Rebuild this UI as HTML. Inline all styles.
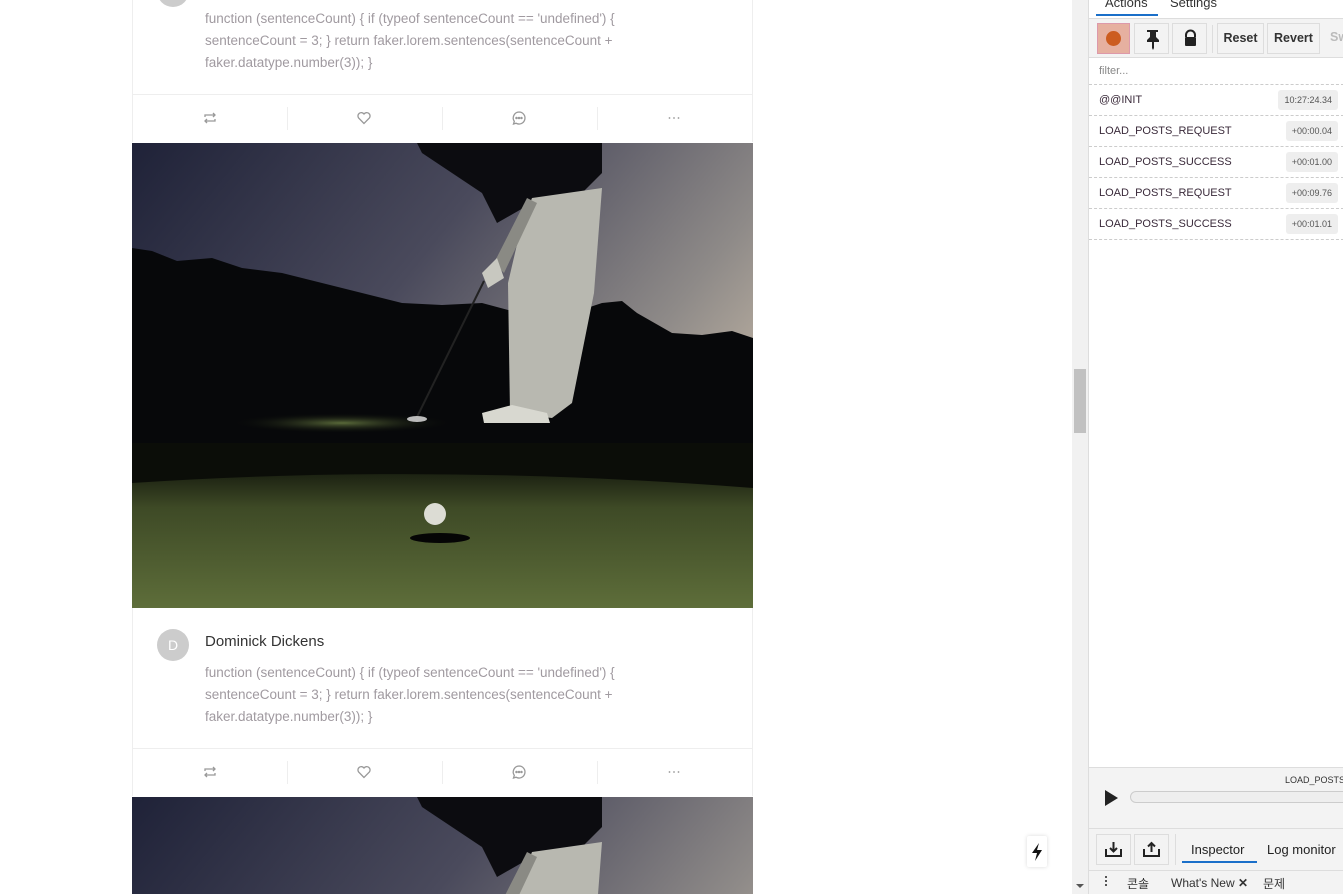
<!DOCTYPE html>
<html><head><meta charset="utf-8"><style>
*{margin:0;padding:0;box-sizing:border-box}
body{width:1343px;height:894px;overflow:hidden;background:#fff;font-family:"Liberation Sans","Noto Sans CJK KR",sans-serif;position:relative}
.card{position:absolute;left:132px;width:621px;border-left:1px solid #eee;border-right:1px solid #eee;background:#fff}
.txt{position:absolute;left:205px;font-size:13.5px;line-height:22px;color:#a09aa0;width:500px}
.bar{position:absolute;left:132px;width:621px;height:48px;border-top:1px solid #eee;border-left:1px solid #eee;border-right:1px solid #eee}
.bar .div{position:absolute;top:12px;height:23px;width:1px;background:#eee}
.bar svg{position:absolute;top:15px}
.avatar{position:absolute;left:157px;width:32px;height:32px;border-radius:50%;background:#ccc;color:#fff;font-size:14px;text-align:center;line-height:32px}
.dev{position:absolute;left:1088px;top:0;width:255px;height:894px;background:#fff;border-left:1px solid #ddd;font-size:11px;color:#333}
.row{position:absolute;left:0;width:255px;height:31px;border-bottom:1px dashed #ccc}
.row span{position:absolute;left:10px;top:9px;font-size:11px;color:#3a2a3a}
.row b{position:absolute;right:6px;top:5px;height:20px;background:#eee;border-radius:3px;font-weight:normal;font-size:9px;color:#555;padding:0 6px;line-height:20px}
.btn{position:absolute;top:23px;height:31px;border:1px solid #ddd;background:#f3f3f3;font-size:12.5px;font-weight:bold;color:#333;line-height:29px;text-align:center}
</style></head><body>

<div class="card" style="top:0;height:95px"></div>
<div class="avatar" style="top:-25px"></div>
<div class="txt" style="top:8px">function (sentenceCount) { if (typeof sentenceCount == 'undefined') { sentenceCount = 3; } return faker.lorem.sentences(sentenceCount + faker.datatype.number(3)); }</div>

<div class="bar" style="top:94px">
 <svg style="left:69px" width="16" height="16" viewBox="0 0 16 16" fill="none" stroke="#999" stroke-width="1.3"><path d="M3 7V5h10M11 3l2 2-2 2M13 9v2H3M5 13l-2-2 2-2"/></svg>
 <div class="div" style="left:154px"></div>
 <svg style="left:223px" width="16" height="16" viewBox="0 0 16 16" fill="none" stroke="#999" stroke-width="1.3"><path d="M8 13.5L2.6 8A3.2 3.2 0 0 1 8 4a3.2 3.2 0 0 1 5.4 4z"/></svg>
 <div class="div" style="left:309px"></div>
 <svg style="left:378px" width="16" height="16" viewBox="0 0 16 16" fill="none" stroke="#999" stroke-width="1.3"><path d="M8 2a6 6 0 1 1-3 11.2L2.5 14l.8-2.6A6 6 0 0 1 8 2z"/><circle cx="5.5" cy="8" r=".6" fill="#999"/><circle cx="8" cy="8" r=".6" fill="#999"/><circle cx="10.5" cy="8" r=".6" fill="#999"/></svg>
 <div class="div" style="left:464px"></div>
 <svg style="left:533px" width="16" height="16" viewBox="0 0 16 16" fill="#999"><circle cx="3.5" cy="8" r="0.9"/><circle cx="8" cy="8" r="0.9"/><circle cx="12.5" cy="8" r="0.9"/></svg>
</div>

<svg id="golf" style="position:absolute;left:132px;top:143px" width="621" height="466" viewBox="0 0 621 466">
<defs>
<linearGradient id="sky" x1="0" y1="0" x2="1" y2="0.6"><stop offset="0" stop-color="#1f2238"/><stop offset=".45" stop-color="#4a4a5c"/><stop offset=".8" stop-color="#8e8a88"/><stop offset="1" stop-color="#c0b4a4"/></linearGradient>
<linearGradient id="grass" x1="0" y1="0" x2="0" y2="1"><stop offset="0" stop-color="#1c2212"/><stop offset=".25" stop-color="#3e4a26"/><stop offset="1" stop-color="#5e6e3a"/></linearGradient>
<radialGradient id="glow" cx=".5" cy=".5" r=".5"><stop offset="0" stop-color="#5a6a3a"/><stop offset="1" stop-color="#0a0c08" stop-opacity="0"/></radialGradient>
</defs>
<rect width="621" height="466" fill="url(#sky)"/>
<path d="M0 105L20 108 45 118 80 115 110 125 150 130 190 140 230 150 270 160 310 162 350 160 380 168 440 170 470 160 490 158 505 170 540 190 570 192 600 188 621 195V340H0z" fill="#07080a"/>
<rect y="300" width="621" height="60" fill="#0b0d08"/>
<path d="M0 340Q300 320 621 345V466H0z" fill="url(#grass)"/>
<ellipse cx="210" cy="280" rx="110" ry="10" fill="url(#glow)"/>
<path d="M285 0H470V30L440 60 400 60 365 80 350 50 290 10z" fill="#0c0c10"/>
<path d="M400 55L470 45 462 150 440 260 420 275 378 270 376 140 390 80z" fill="#b8b8b0"/>
<path d="M362 120L395 55 405 60 372 130z" fill="#8a8a84"/>
<path d="M350 130L365 115 372 135 356 145z" fill="#c8c8c0"/>
<path d="M352 138L284 276" stroke="#222" stroke-width="2"/>
<ellipse cx="285" cy="276" rx="10" ry="3" fill="#bbb"/>
<path d="M350 270L380 262 415 270 418 280 352 280z" fill="#d8d8d0"/>
<ellipse cx="308" cy="395" rx="30" ry="5" fill="#050505"/>
<circle cx="303" cy="371" r="11" fill="#dcdcd4"/>
</svg>

<div class="card" style="top:608px;height:141px"></div>
<div class="avatar" style="top:629px">D</div>
<div style="position:absolute;left:205px;top:633px;font-size:15px;color:#333;font-weight:500">Dominick Dickens</div>
<div class="txt" style="top:662px">function (sentenceCount) { if (typeof sentenceCount == 'undefined') { sentenceCount = 3; } return faker.lorem.sentences(sentenceCount + faker.datatype.number(3)); }</div>

<div class="bar" style="top:748px">
 <svg style="left:69px" width="16" height="16" viewBox="0 0 16 16" fill="none" stroke="#999" stroke-width="1.3"><path d="M3 7V5h10M11 3l2 2-2 2M13 9v2H3M5 13l-2-2 2-2"/></svg>
 <div class="div" style="left:154px"></div>
 <svg style="left:223px" width="16" height="16" viewBox="0 0 16 16" fill="none" stroke="#999" stroke-width="1.3"><path d="M8 13.5L2.6 8A3.2 3.2 0 0 1 8 4a3.2 3.2 0 0 1 5.4 4z"/></svg>
 <div class="div" style="left:309px"></div>
 <svg style="left:378px" width="16" height="16" viewBox="0 0 16 16" fill="none" stroke="#999" stroke-width="1.3"><path d="M8 2a6 6 0 1 1-3 11.2L2.5 14l.8-2.6A6 6 0 0 1 8 2z"/><circle cx="5.5" cy="8" r=".6" fill="#999"/><circle cx="8" cy="8" r=".6" fill="#999"/><circle cx="10.5" cy="8" r=".6" fill="#999"/></svg>
 <div class="div" style="left:464px"></div>
 <svg style="left:533px" width="16" height="16" viewBox="0 0 16 16" fill="#999"><circle cx="3.5" cy="8" r="0.9"/><circle cx="8" cy="8" r="0.9"/><circle cx="12.5" cy="8" r="0.9"/></svg>
</div>

<div style="position:absolute;left:132px;top:797px;width:621px;height:97px;overflow:hidden">
<svg width="621" height="466" viewBox="0 0 621 466">
<use href="#golf"/>
<rect width="621" height="466" fill="url(#sky)"/>
<path d="M0 105L20 108 45 118 80 115 110 125 150 130 190 140 230 150 270 160 310 162 350 160 380 168 440 170 470 160 490 158 505 170 540 190 570 192 600 188 621 195V340H0z" fill="#07080a"/>
<path d="M285 0H470V30L440 60 400 60 365 80 350 50 290 10z" fill="#0c0c10"/>
<path d="M400 55L470 45 462 150 440 260 420 275 378 270 376 140 390 80z" fill="#b8b8b0"/>
<path d="M362 120L395 55 405 60 372 130z" fill="#8a8a84"/>
</svg></div>

<!-- scrollbar -->
<div style="position:absolute;left:1072px;top:0;width:16px;height:894px;background:#f1f1f1"></div>
<div style="position:absolute;left:1074px;top:369px;width:12px;height:64px;background:#c1c1c1"></div>
<div style="position:absolute;left:1076px;top:884px;width:0;height:0;border-left:4px solid transparent;border-right:4px solid transparent;border-top:4px solid #555"></div>

<!-- lightning -->
<div style="position:absolute;left:1027px;top:836px;width:20px;height:31px;background:#fff;box-shadow:0 0 4px rgba(0,0,0,.15);border-radius:2px">
<svg width="20" height="31" viewBox="0 0 20 31"><path d="M12 7L5 17h5l-2 8 7-11h-5z" fill="#111"/></svg></div>

<div class="dev">
 <div style="position:absolute;left:0;top:0;width:255px;height:19px;border-bottom:1px solid #ddd;background:#fff"></div>
 <div style="position:absolute;left:16px;top:-5px;font-size:13px;color:#333">Actions</div>
 <div style="position:absolute;left:81px;top:-5px;font-size:13px;color:#333">Settings</div>
 <div style="position:absolute;left:7px;top:14px;width:62px;height:2px;background:#1a6fc9"></div>
 <div style="position:absolute;left:0;top:19px;width:255px;height:39px;background:#f3f3f3;border-bottom:1px solid #ddd"></div>
 <div class="btn" style="left:8px;width:33px;background:#e6b0a0;border-color:#d9a"><div style="position:absolute;left:8px;top:7px;width:15px;height:15px;border-radius:50%;background:#cc5c20"></div></div>
 <div class="btn" style="left:45px;width:35px"><svg width="35" height="29" viewBox="0 0 35 29"><path d="M12 6h11v2h-2v5l3 3v2h-5v6l-1 2-1-2v-6h-5v-2l3-3V8h-3z" fill="#222"/></svg></div>
 <div class="btn" style="left:83px;width:35px"><svg width="35" height="29" viewBox="0 0 35 29"><path d="M13 13v-2a4.5 4.5 0 0 1 9 0v2" fill="none" stroke="#222" stroke-width="2"/><rect x="12" y="13" width="11" height="9" rx="1" fill="#222"/></svg></div>
 <div style="position:absolute;left:123px;top:25px;width:1px;height:28px;background:#ddd"></div>
 <div class="btn" style="left:128px;width:47px">Reset</div>
 <div class="btn" style="left:178px;width:53px">Revert</div>
 <div style="position:absolute;left:241px;top:30px;font-size:12.5px;color:#bbb;font-weight:bold">Sw</div>
 <div style="position:absolute;left:0;top:58px;width:255px;height:27px;border-bottom:1px dashed #ccc"><span style="position:absolute;left:10px;top:7px;color:#888;font-size:11px">filter...</span></div>
 <div class="row" style="top:85px"><span>@@INIT</span><b>10:27:24.34</b></div>
 <div class="row" style="top:116px"><span>LOAD_POSTS_REQUEST</span><b>+00:00.04</b></div>
 <div class="row" style="top:147px"><span>LOAD_POSTS_SUCCESS</span><b>+00:01.00</b></div>
 <div class="row" style="top:178px"><span>LOAD_POSTS_REQUEST</span><b>+00:09.76</b></div>
 <div class="row" style="top:209px"><span>LOAD_POSTS_SUCCESS</span><b>+00:01.01</b></div>

 <div style="position:absolute;left:0;top:767px;width:255px;height:61px;background:#f3f3f3;border-top:1px solid #ddd"></div>
 <div style="position:absolute;left:196px;top:775px;font-size:9px;color:#333">LOAD_POSTS</div>
 <svg style="position:absolute;left:14px;top:789px" width="16" height="18"><path d="M2 1l13 8-13 8z" fill="#222"/></svg>
 <div style="position:absolute;left:41px;top:791px;width:230px;height:12px;border:1px solid #ccc;border-radius:6px;background:#eee"></div>

 <div style="position:absolute;left:0;top:828px;width:255px;height:42px;background:#f3f3f3;border-top:1px solid #ddd"></div>
 <div class="btn" style="left:7px;top:834px;width:35px"><svg width="33" height="29" viewBox="0 0 33 29"><path d="M9 14v7h15v-7M16.5 7v9M13 13l3.5 3.5L20 13" fill="none" stroke="#222" stroke-width="2"/></svg></div>
 <div class="btn" style="left:45px;top:834px;width:35px"><svg width="33" height="29" viewBox="0 0 33 29"><path d="M9 14v7h15v-7M16.5 17V8M13 11.5l3.5-3.5 3.5 3.5" fill="none" stroke="#222" stroke-width="2"/></svg></div>
 <div style="position:absolute;left:86px;top:834px;width:1px;height:31px;background:#ddd"></div>
 <div style="position:absolute;left:102px;top:842px;font-size:13px;color:#222">Inspector</div>
 <div style="position:absolute;left:93px;top:861px;width:75px;height:2px;background:#1a6fc9"></div>
 <div style="position:absolute;left:178px;top:842px;font-size:13px;color:#222">Log monitor</div>

 <div style="position:absolute;left:0;top:870px;width:255px;height:24px;background:#f3f3f3;border-top:1px solid #ddd"></div>
 <div style="position:absolute;left:16px;top:876px;width:2px;height:2px;background:#555;box-shadow:0 4px 0 #555,0 8px 0 #555"></div>
 <div style="position:absolute;left:38px;top:875px;font-size:12px;color:#333">콘솔</div>
 <div style="position:absolute;left:82px;top:876px;font-size:12px;color:#333">What's New <span style="font-weight:bold">✕</span></div>
 <div style="position:absolute;left:174px;top:875px;font-size:12px;color:#333">문제</div>
</div>
</body></html>
